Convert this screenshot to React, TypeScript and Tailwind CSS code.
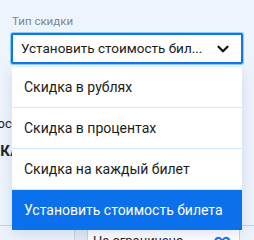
import { ChevronDown } from "lucide-react"

const options = ["Скидка в рублях", "Скидка в процентах", "Скидка на каждый билет", "Установить стоимость билета"]

export default function App() {
  const selected = 3
  return (
    <div className="relative w-[254px] h-[240px] overflow-hidden bg-[#eef4fc] font-['Roboto',sans-serif]">
      {/* page behind the menu */}
      <div className="absolute left-0 top-[117px] text-[13px] text-[#222] leading-none">
        <div className="-ml-[10px]">пос</div>
        <div className="-ml-[10px] mt-[14px] font-bold text-[15px] tracking-wide">СКА</div>
      </div>
      <div className="absolute left-0 top-[225px] w-[254px] flex border-t border-[#c9d3df]">
        <div className="w-[75px] h-[20px] border-r border-[#c9d3df]" />
        <div className="w-[13px] bg-[#e3ebf5] border-r border-[#c9d3df]" />
        <div className="flex-1 bg-white flex items-center justify-between pl-[5px] pr-[8px] pt-[5px] text-[13px] text-[#222] mr-[14px] border-r border-[#c9d3df]">
          <span>Не ограничено</span>
          <span className="text-[#1a73e8] font-bold text-[17px] leading-none">∞</span>
        </div>
      </div>

      <div className="relative px-[11px] pt-[13px]">
        <div className="pl-[1px] text-[11.5px] text-[#7b8597] leading-[16px]">Тип скидки</div>
        <div className="mt-[4px] h-[31px] rounded-[2px] border-2 border-[#1675e5] ring-1 ring-[#8ecdf7] bg-white flex items-center pl-[8px] pr-[9px]">
          <span className="flex-1 whitespace-nowrap overflow-hidden text-[13.5px] text-[#1c1c1c]">Установить стоимость бил...</span>
          <ChevronDown size={18} strokeWidth={3} className="text-[#111]" />
        </div>
        <div className="mt-[3px] mx-[1px] bg-white shadow-[0_4px_14px_rgba(60,100,160,0.18)]">
          {options.map((o, i) => (
            <div
              key={o}
              className={
                i === selected
                  ? "h-[40px] flex items-center pl-[12px] bg-[#0a70eb] text-white text-[14px]"
                  : "h-[41px] flex items-center pl-[12px] text-[#1c1c1c] text-[14px] border-b border-[#cfe8f8]"
              }
            >
              {o}
            </div>
          ))}
        </div>
      </div>
    </div>
  )
}
